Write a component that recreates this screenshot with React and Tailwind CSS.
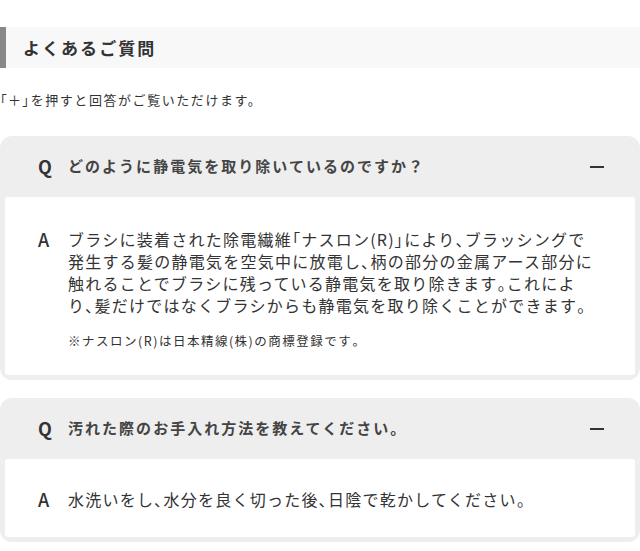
const faqs = [
  {
    q: 'どのように静電気を取り除いているのですか？',
    a: 'ブラシに装着された除電繊維「ナスロン(R)」により、ブラッシングで発生する髪の静電気を空気中に放電し、柄の部分の金属アース部分に触れることでブラシに残っている静電気を取り除きます。これにより、髪だけではなくブラシからも静電気を取り除くことができます。',
    note: '※ナスロン(R)は日本精線(株)の商標登録です。',
  },
  {
    q: '汚れた際のお手入れ方法を教えてください。',
    a: '水洗いをし、水分を良く切った後、日陰で乾かしてください。',
  },
]

// punctuation set half-width, kana stay full-width
function Yaku({ text }) {
  return text.split(/([、。「」（）])/).map((part, i) =>
    i % 2 === 1 ? (
      <span key={i} className="[font-feature-settings:'palt']">
        {part}
      </span>
    ) : (
      part
    )
  )
}

function FaqItem({ item }) {
  return (
    <div className="rounded-[12px] bg-[#eeeeee] px-[5px] pb-[5px]">
      <div className="flex h-[61px] items-center pl-[33px] pr-[31px]">
        <span className="w-[30px] text-[18px] font-bold text-[#333]">Q</span>
        <span className="flex-1 text-[15px] font-bold tracking-[0.135em] text-[#444]">{item.q}</span>
        <span className="block h-[2px] w-[14px] bg-[#333]" />
      </div>
      <div className={`rounded-[3px] bg-white pl-[33px] pr-[36px] ${item.note ? 'pt-[31px] pb-[25px]' : 'pt-[29px] pb-[27px]'}`}>
        <div className="flex">
          <span className="w-[30px] shrink-0 text-[18px] font-medium leading-[22px] text-[#333]">A</span>
          <div className="flex-1">
            <p className="text-[16px] leading-[22px] tracking-[0.078em] text-[#333]">
              <Yaku text={item.a} />
            </p>
            {item.note && (
              <p className="mt-[16px] text-[12.5px] leading-[18px] tracking-[0.12em] text-[#333]">
                <Yaku text={item.note} />
              </p>
            )}
          </div>
        </div>
      </div>
    </div>
  )
}

export default function App() {
  return (
    <div className="min-h-[551px] bg-white pt-[27px] font-['Noto_Sans_CJK_JP',sans-serif]">
      <h2 className="flex h-[41px] items-center border-l-[6px] border-[#888] bg-[#f8f8f8] pl-[17px] text-[17px] font-bold tracking-[0.12em] text-[#333]">
        よくあるご質問
      </h2>
      <p className="mt-[23px] text-[13px] leading-[18px] tracking-[0.12em] text-[#333]">
        <span className="[font-feature-settings:'palt']">「＋」</span>を押すと回答がご覧いただけます。
      </p>
      <div className="mt-[27px] flex flex-col gap-[18px]">
        {faqs.map((f) => (
          <FaqItem key={f.q} item={f} />
        ))}
      </div>
    </div>
  )
}
